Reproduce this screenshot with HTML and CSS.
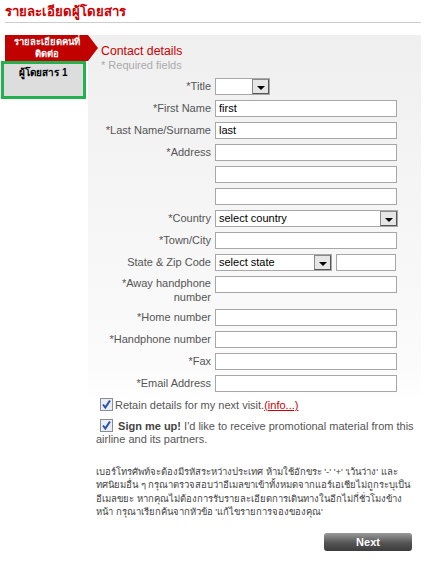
FILE: index.html
```html
<!DOCTYPE html>
<html lang="th">
<head>
  <meta charset="UTF-8" />
  <title>รายละเอียดผู้โดยสาร</title>
  <link rel="stylesheet" href="styles.css">
</head>
<body>

<h1 class="page-title">รายละเอียดผู้โดยสาร</h1>

<div class="layout">
  <!-- ขั้นตอน -->
  <div class="steps">
    <div class="step step-active">รายละเอียดคนที่<br>ติดต่อ</div>
    <div class="step step-next">ผู้โดยสาร 1</div>
  </div>

  <!-- ฟอร์มผู้ติดต่อ -->
  <div class="panel">
    <h2 class="panel-title">Contact details</h2>
    <p class="required">* Required fields</p>

    <div class="form">
      <label>*Title</label>
      <div><span class="select select-title"><span class="select-text"></span><span class="select-btn"></span></span></div>

      <label>*First Name</label>
      <div><span class="field">first</span></div>

      <label>*Last Name/Surname</label>
      <div><span class="field">last</span></div>

      <label>*Address</label>
      <div><span class="field"></span></div>
      <label></label>
      <div><span class="field"></span></div>
      <label></label>
      <div><span class="field"></span></div>

      <label>*Country</label>
      <div><span class="select select-wide"><span class="select-text">select country</span><span class="select-btn"></span></span></div>

      <label>*Town/City</label>
      <div><span class="field"></span></div>

      <label>State &amp; Zip Code</label>
      <div class="pair">
        <span class="select select-state"><span class="select-text">select state</span><span class="select-btn"></span></span>
        <span class="field field-zip"></span>
      </div>

      <label class="tall">*Away handphone number</label>
      <div><span class="field"></span></div>

      <label>*Home number</label>
      <div><span class="field"></span></div>

      <label>*Handphone number</label>
      <div><span class="field"></span></div>

      <label>*Fax</label>
      <div><span class="field"></span></div>

      <label>*Email Address</label>
      <div><span class="field"></span></div>
    </div>

    <p class="check">
      <span class="box"><svg width="11" height="11" viewBox="0 0 11 11"><path d="M2 5.5 L4.3 8.5 L9 1.5" fill="none" stroke="#2a4fa8" stroke-width="2"/></svg></span>Retain details for my next visit.<a href="#">(info...)</a>
    </p>
    <p class="check check-promo">
      <span class="box"><svg width="11" height="11" viewBox="0 0 11 11"><path d="M2 5.5 L4.3 8.5 L9 1.5" fill="none" stroke="#2a4fa8" stroke-width="2"/></svg></span>
      <b>Sign me up!</b> I'd like to receive promotional material from this airline and its partners.
    </p>

    <p class="note">เบอร์โทรศัพท์จะต้องมีรหัสระหว่างประเทศ ห้ามใช้อักขระ '-' '+' 'เว้นว่าง' และ<br>ทศนิยมอื่น ๆ กรุณาตรวจสอบว่าอีเมลขาเข้าทั้งหมดจากแอร์เอเชียไม่ถูกระบุเป็น<br>อีเมลขยะ หากคุณไม่ต้องการรับรายละเอียดการเดินทางในอีกไม่กี่ชั่วโมงข้าง<br>หน้า กรุณาเรียกค้นจากหัวข้อ 'แก้ไขรายการจองของคุณ'</p>

    <div class="actions">
      <button class="btn-next">Next</button>
    </div>
  </div>
</div>

</body>
</html>
```

FILE: styles.css
```css
html, body {
  margin: 0;
  padding: 0;
  background: #fff;
  font-family: "Liberation Sans", Arial, sans-serif;
  font-size: 11px;
  color: #555;
}
*, *::before, *::after {
  box-sizing: border-box;
}
.page-title {
  margin: 0 0 12px 5px;
  width: 416px;
  height: 23px;
  padding-top: 3px;
  font-size: 13.2px;
  line-height: 17px;
  color: #cc0000;
  border-bottom: 1px solid #cccccc;
}
.layout {
  display: flex;
  align-items: flex-start;
}
.steps {
  width: 88px;
  flex-shrink: 0;
}
.step {
  font-weight: bold;
  text-align: center;
}
.step-active {
  position: relative;
  margin-left: 5px;
  height: 26px;
  padding-top: 1px;
  font-size: 9.5px;
  line-height: 12px;
  background: #c10000;
  color: #fff;
}
.step-active::after {
  content: "";
  position: absolute;
  top: 0;
  right: -10px;
  border-left: 10px solid #c10000;
  border-top: 13px solid transparent;
  border-bottom: 13px solid transparent;
}
.step-next {
  margin-left: 1px;
  width: 85px;
  height: 38px;
  padding-top: 2px;
  font-size: 10px;
  line-height: 14px;
  background: #dddddd;
  border: 3px solid #22b14c;
  color: #000;
}
.panel {
  width: 333px;
  padding-bottom: 12px;
  background: linear-gradient(#efefef, #fbfbfb 330px, #ffffff 370px);
}
.panel-title {
  margin: 8px 0 0 13px;
  font-size: 12.3px;
  font-weight: normal;
  line-height: 16px;
  color: #cc0000;
}
.required {
  margin: -1px 0 0 13px;
  line-height: 14px;
  color: #aaaaaa;
}
.form {
  display: grid;
  grid-template-columns: 123px 182px;
  column-gap: 4px;
  row-gap: 5px;
  margin-top: 6px;
}
.form label {
  text-align: right;
  line-height: 17px;
  white-space: nowrap;
}
.form label.tall {
  white-space: normal;
  line-height: 14px;
  padding-left: 30px;
  height: 28px;
}
.field {
  display: block;
  width: 182px;
  height: 17px;
  padding: 0 3px;
  background: #fff;
  border: 1px solid #a7a7a7;
  color: #000;
  line-height: 15px;
}
.pair {
  display: flex;
  gap: 4px;
}
.field-zip {
  width: 60px;
}
.select {
  display: flex;
  height: 17px;
  background: #fff;
  border: 1px solid #a7a7a7;
  color: #000;
}
.select-title {
  width: 55px;
}
.select-wide {
  width: 183px;
}
.select-state {
  width: 117px;
}
.select-text {
  flex: 1;
  padding-left: 3px;
  line-height: 15px;
}
.select-btn {
  position: relative;
  width: 17px;
  height: 15px;
  background: #e6e6e6;
  border: 1px solid;
  border-color: #8a8a8a #555 #555 #8a8a8a;
}
.select-btn::after {
  content: "";
  position: absolute;
  left: 4px;
  top: 6px;
  border-top: 4px solid #000;
  border-left: 4px solid transparent;
  border-right: 4px solid transparent;
}
.check {
  margin: 6px 0 0 8px;
  line-height: 13px;
  width: 318px;
}
.check-promo {
  margin-top: 7px;
}
.box {
  display: inline-block;
  vertical-align: -2px;
  width: 13px;
  height: 13px;
  margin: 0 2px 0 4px;
  background: #e9eef5;
  border: 1px solid #8c8c8c;
}
.box svg {
  display: block;
}
.check a {
  color: #cc0000;
}
.check b {
  color: #444;
}
.note {
  margin: 19px 0 0 8px;
  white-space: nowrap;
  font-size: 9.5px;
  line-height: 13.4px;
  color: #444;
}
.actions {
  display: flex;
  justify-content: flex-end;
  margin: 14px 9px 0 0;
}
.btn-next {
  width: 88px;
  height: 18px;
  padding: 0;
  border: none;
  border-radius: 3px;
  background: linear-gradient(#9a9a9a, #555 55%, #3c3c3c);
  color: #fff;
  font-family: "Liberation Sans", Arial, sans-serif;
  font-size: 11px;
  font-weight: bold;
}
```
